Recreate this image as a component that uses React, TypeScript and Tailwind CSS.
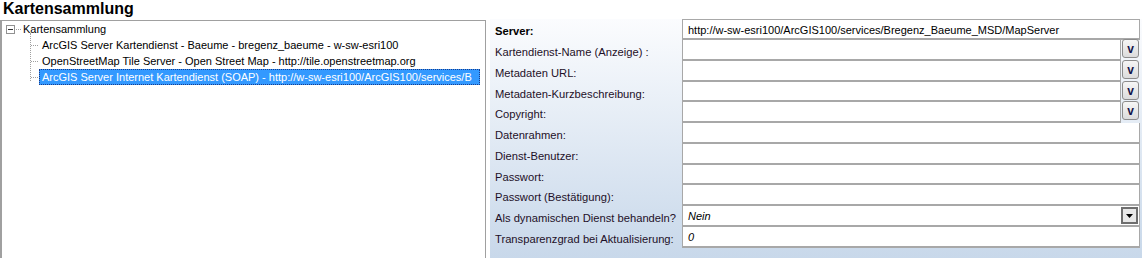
import React from 'react';

type Row = {
  label: string;
  value?: string;
  italic?: boolean;
  bold?: boolean;
  kind?: 'text' | 'picker' | 'combo';
  h: number;
};

const rows: Row[] = [
  { label: 'Server:', bold: true, value: 'http://w-sw-esri100/ArcGIS100/services/Bregenz_Baeume_MSD/MapServer', h: 21 },
  { label: 'Kartendienst-Name (Anzeige) :', kind: 'picker', h: 21 },
  { label: 'Metadaten URL:', kind: 'picker', h: 21 },
  { label: 'Metadaten-Kurzbeschreibung:', kind: 'picker', h: 20 },
  { label: 'Copyright:', kind: 'picker', h: 21 },
  { label: 'Datenrahmen:', h: 21 },
  { label: 'Dienst-Benutzer:', h: 21 },
  { label: 'Passwort:', h: 20 },
  { label: 'Passwort (Bestätigung):', h: 21 },
  { label: 'Als dynamischen Dienst behandeln?', kind: 'combo', value: 'Nein', italic: true, h: 21 },
  { label: 'Transparenzgrad bei Aktualisierung:', value: '0', italic: true, h: 21 },
];

const children = [
  'ArcGIS Server Kartendienst - Baeume - bregenz_baeume - w-sw-esri100',
  'OpenStreetMap Tile Server - Open Street Map - http://tile.openstreetmap.org',
  'ArcGIS Server Internet Kartendienst (SOAP) - http://w-sw-esri100/ArcGIS100/services/B',
];

const PickerButton = () => (
  <div className="w-[17px] h-[19px] -mt-[1px] rounded-[3px] border border-[#8c8c8c] bg-gradient-to-b from-[#f6f6f6] to-[#dcdcdc] flex items-center justify-center text-[12px] font-bold text-[#14144a] leading-none">
    v
  </div>
);

const ComboButton = () => (
  <div className="w-[17px] h-[17px] mr-[1px] border-2 border-[#6e6e6e] bg-[#e8e8e8] flex items-center justify-center">
    <svg width="7" height="4" viewBox="0 0 7 4">
      <polygon points="0,0 7,0 3.5,4" fill="#000" />
    </svg>
  </div>
);

const App: React.FC = () => {
  return (
    <div
      className="w-[1142px] h-[258px] bg-white overflow-hidden text-[11px] text-black"
      style={{ fontFamily: '"Liberation Sans", Arial, sans-serif' }}
    >
      <div className="h-[19px] pl-[3px] text-[16px] font-bold leading-[17px] text-black">Kartensammlung</div>
      <div className="flex h-[239px]">
        {/* tree */}
        <div className="w-[486px] mt-[1px] border-l-2 border-t border-r border-[#a0a0a0] bg-white">
          <div className="flex items-center h-[16px]">
            <div className="ml-[4px] w-[9px] h-[9px] border border-[#919191] bg-white flex items-center justify-center">
              <div className="w-[5px] h-[1px] bg-[#333]" />
            </div>
            <div className="w-[5px] border-t border-dotted border-[#a0a0a0] mx-[1px]" />
            <span className="pl-[1px]">Kartensammlung</span>
          </div>
          <div className="relative">
            <div className="absolute left-[28px] -top-[4px] h-[48px] border-l border-dotted border-[#a0a0a0]" />
            {children.map((c, i) => (
              <div key={c} className="flex items-center h-[16px]">
                <div className="ml-[29px] w-[7px] border-t border-dotted border-[#a0a0a0]" />
                <span
                  className={
                    i === 2
                      ? 'ml-[1px] px-[2px] h-[16px] leading-[15px] bg-[#3399ff] text-white border border-dotted border-[#1a3c8c] w-[441px] whitespace-nowrap overflow-hidden'
                      : 'ml-[1px] px-[3px] whitespace-nowrap'
                  }
                >
                  {c}
                </span>
              </div>
            ))}
          </div>
        </div>
        {/* properties */}
        <div className="flex-1 ml-[4px] bg-gradient-to-b from-[#fbfcfe] to-[#c8d8ea] pr-[2px]">
          <div className="flex flex-col">
            {rows.map((r, i) => (
              <div key={r.label} className="flex" style={{ height: r.h }}>
                <div
                  className={`w-[192px] pl-[5px] pt-[4px] flex items-center whitespace-nowrap text-[11.2px] text-[#1e1028] ${r.bold ? 'font-bold text-black' : ''}`}
                >
                  {r.label}
                </div>
                <div
                  className={`flex-1 flex items-center bg-white border-l border-r border-[#a8a8a8] border-b-2 ${i === 0 ? 'border-t' : ''} ${r.kind === 'picker' ? 'mr-[19px]' : ''} relative`}
                >
                  {r.value && (
                    <span className={`pl-[5px] pt-[2px] whitespace-nowrap ${r.italic ? 'italic' : ''}`}>{r.value}</span>
                  )}
                  {r.kind === 'combo' && <div className="ml-auto"><ComboButton /></div>}
                  {r.kind === 'picker' && (
                    <div className="absolute -right-[19px] top-0">
                      <PickerButton />
                    </div>
                  )}
                </div>
              </div>
            ))}
          </div>
        </div>
      </div>
    </div>
  );
};

export default App;
